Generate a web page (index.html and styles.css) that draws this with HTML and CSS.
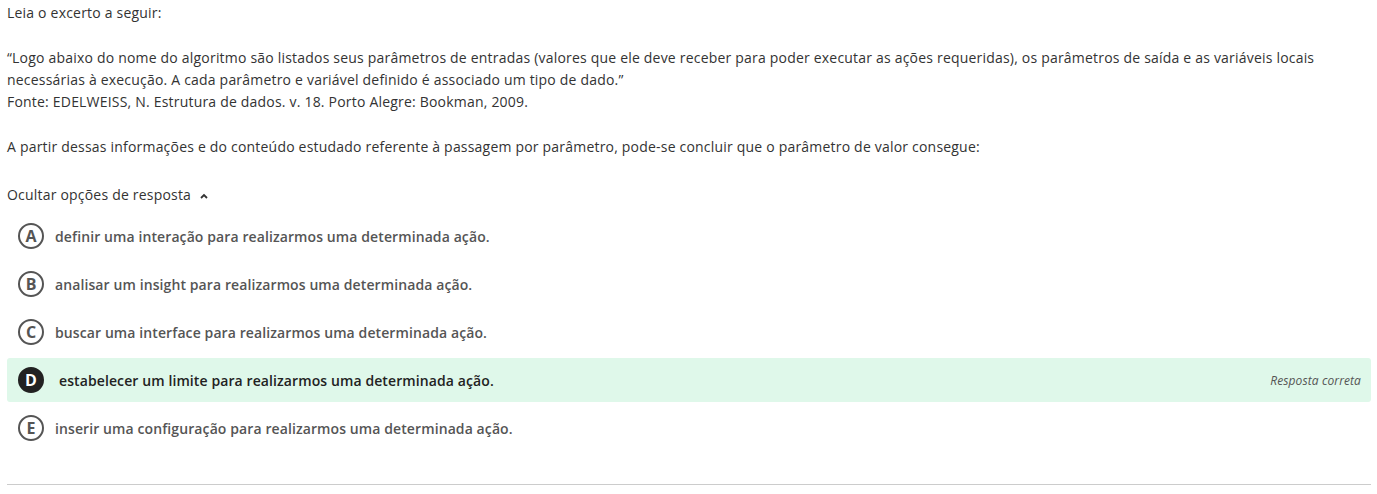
FILE: index.html
```html
<!DOCTYPE html>
<html lang="pt">
<head>
<meta charset="utf-8">
<link rel="stylesheet" href="styles.css">
</head>
<body>
<div class="page">
  <p class="line first">Leia o excerto a seguir:</p>
  <p class="line para">“Logo abaixo do nome do algoritmo são listados seus parâmetros de entradas (valores que ele deve receber para poder executar as ações requeridas), os parâmetros de saída e as variáveis locais necessárias à execução. A cada parâmetro e variável definido é associado um tipo de dado.”<br>Fonte: EDELWEISS, N. Estrutura de dados. v. 18. Porto Alegre: Bookman, 2009.</p>
  <p class="line para">A partir dessas informações e do conteúdo estudado referente à passagem por parâmetro, pode-se concluir que o parâmetro de valor consegue:</p>
  <div class="toggle">Ocultar opções de resposta
    <svg class="chev" width="8" height="6" viewBox="0 0 8 6"><path d="M1 5 L4 2 L7 5" fill="none" stroke="#333" stroke-width="1.8"/></svg>
  </div>
  <ul class="options">
    <li class="opt"><span class="letter">A</span><span class="otext">definir uma interação para realizarmos uma determinada ação.</span></li>
    <li class="opt"><span class="letter">B</span><span class="otext">analisar um insight para realizarmos uma determinada ação.</span></li>
    <li class="opt"><span class="letter">C</span><span class="otext">buscar uma interface para realizarmos uma determinada ação.</span></li>
    <li class="opt correct"><span class="letter">D</span><span class="otext">estabelecer um limite para realizarmos uma determinada ação.</span><span class="tag">Resposta correta</span></li>
    <li class="opt"><span class="letter">E</span><span class="otext">inserir uma configuração para realizarmos uma determinada ação.</span></li>
  </ul>
  <div class="rule"></div>
</div>
</body>
</html>
```
FILE: styles.css
```css
html, body {
  margin: 0;
  padding: 0;
  background: #fff;
}
.page {
  padding: 2px 6px 0 7px;
  font-family: "Open Sans", "Liberation Sans", sans-serif;
  font-size: 14px;
  letter-spacing: 0.2px;
  color: #333;
}
.line {
  margin: 0;
  line-height: 22px;
}
.para {
  margin-top: 23px;
}
.toggle {
  margin-top: 26px;
  line-height: 22px;
  display: flex;
  align-items: center;
  gap: 9px;
}
.chev {
  margin-top: 1px;
}
.options {
  list-style: none;
  margin: 8px 0 0 0;
  padding: 0;
  display: flex;
  flex-direction: column;
  gap: 4px;
  letter-spacing: 0.1px;
}
.opt {
  height: 44px;
  display: flex;
  align-items: center;
  padding-left: 11px;
  border-radius: 3px;
  font-weight: 600;
  color: #555;
}
.letter {
  width: 22px;
  height: 22px;
  border: 2px solid #555;
  border-radius: 50%;
  display: flex;
  align-items: center;
  justify-content: center;
  font-size: 16px;
  font-weight: 700;
  letter-spacing: 0;
  color: #555;
  margin-right: 11px;
  flex: none;
}
.correct {
  background: #dff8ea;
  color: #222;
}
.correct .letter {
  background: #222;
  border-color: #222;
  color: #fff;
  margin-right: 15px;
}
.otext {
  flex: 1;
}
.tag {
  font-style: italic;
  font-weight: 400;
  font-size: 12px;
  color: #555;
  margin-right: 10px;
}
.rule {
  margin-top: 34px;
  height: 1px;
  background: #ccc;
}
```
